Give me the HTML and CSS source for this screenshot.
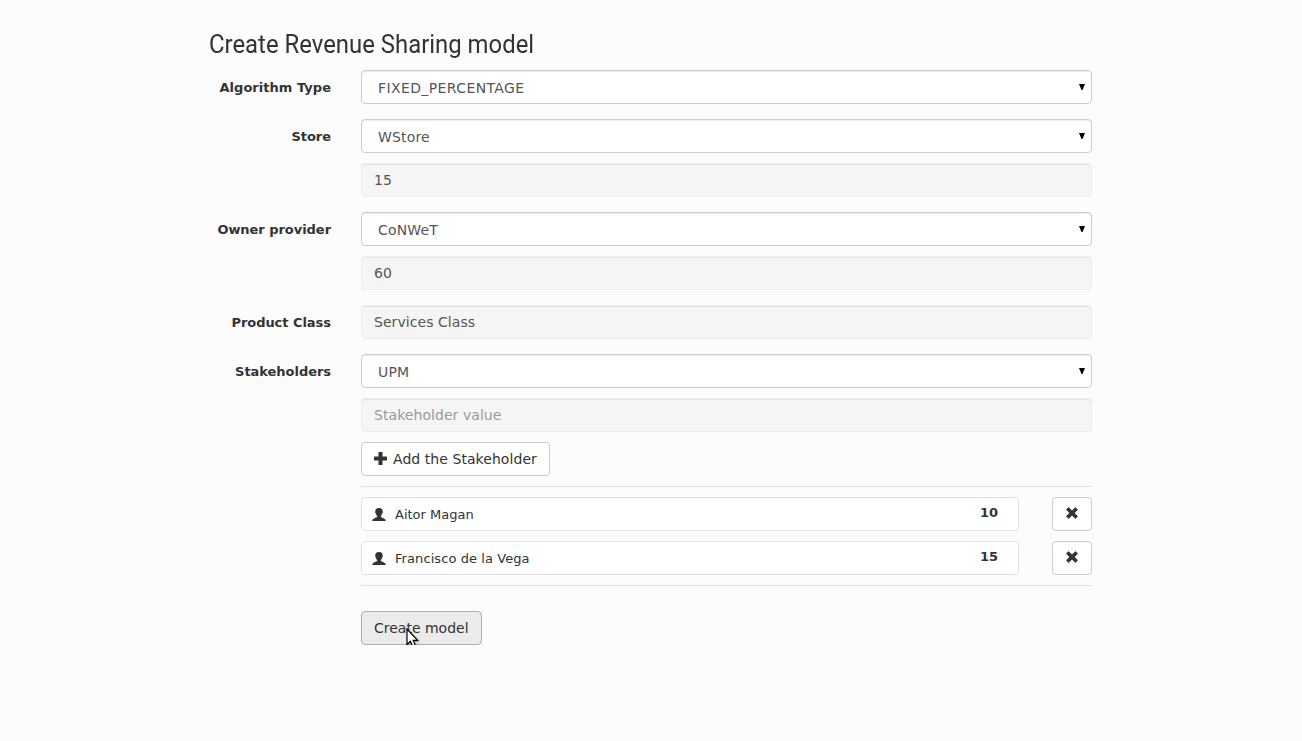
FILE: index.html
```
<!DOCTYPE html>
<html lang="en">
<head>
<meta charset="utf-8">
<title>Create Revenue Sharing model</title>
<link rel="stylesheet" href="styles.css">
</head>
<body>
<svg class="defs" aria-hidden="true">
  <symbol id="arrow" viewBox="0 0 6 6"><path d="M0 0H6L3.5 6H2.5Z"/></symbol>
  <symbol id="user" viewBox="0 0 14 13"><path d="M7 0C9.7 0 10.9 1.4 10.7 3.7C11 4.2 10.7 5.3 10 5.7C9.7 7 9.3 7.6 8.9 8V9C9.4 9.9 13.6 10 13.8 13H.2C.4 10 4.6 9.9 5.1 9V8C4.7 7.6 4.3 7 4 5.7C3.3 5.3 3 4.2 3.3 3.7C3.1 1.4 4.3 0 7 0Z"/></symbol>
  <symbol id="remove" viewBox="0 0 12 12"><path d="M3 .4L6 3.4L9 .4Q9.4 0 9.8.4L11.6 2.2Q12 2.6 11.6 3L8.6 6L11.6 9Q12 9.4 11.6 9.8L9.8 11.6Q9.4 12 9 11.6L6 8.6L3 11.6Q2.6 12 2.2 11.6L.4 9.8Q0 9.4.4 9L3.4 6L.4 3Q0 2.6.4 2.2L2.2.4Q2.6 0 3 .4Z"/></symbol>
</svg>
<main class="page">
  <h1 class="title">Create Revenue Sharing model</h1>
  <form class="form">
    <div class="group">
      <span class="label type">Algorithm Type</span>
      <div class="fields"><div class="control select caps">FIXED_PERCENTAGE<svg class="arrow"><use href="#arrow"/></svg></div></div>
    </div>
    <div class="group">
      <span class="label">Store</span>
      <div class="fields">
        <div class="control select">WStore<svg class="arrow"><use href="#arrow"/></svg></div>
        <div class="control disabled">15</div>
      </div>
    </div>
    <div class="group">
      <span class="label">Owner provider</span>
      <div class="fields">
        <div class="control select">CoNWeT<svg class="arrow"><use href="#arrow"/></svg></div>
        <div class="control disabled">60</div>
      </div>
    </div>
    <div class="group">
      <span class="label">Product Class</span>
      <div class="fields"><div class="control disabled">Services Class</div></div>
    </div>
    <div class="group">
      <span class="label">Stakeholders</span>
      <div class="fields">
        <div class="control select">UPM<svg class="arrow"><use href="#arrow"/></svg></div>
        <div class="control disabled placeholder">Stakeholder value</div>
        <button type="button" class="btn add"><svg class="plus" viewBox="0 0 13 13"><path d="M5 0H8Q8.5 0 8.5.5V4.5H12.5Q13 4.5 13 5V8Q13 8.5 12.5 8.5H8.5V12.5Q8.5 13 8 13H5Q4.5 13 4.5 12.5V8.5H.5Q0 8.5 0 8V5Q0 4.5.5 4.5H4.5V.5Q4.5 0 5 0Z"/></svg>Add the Stakeholder</button>
        <div class="holders">
          <div class="holder">
            <div class="card"><svg class="user"><use href="#user"/></svg><span class="name">Aitor Magan</span><b class="share">10</b></div>
            <button type="button" class="btn remove" aria-label="Remove"><svg class="cross"><use href="#remove"/></svg></button>
          </div>
          <div class="holder">
            <div class="card"><svg class="user"><use href="#user"/></svg><span class="name long">Francisco de la Vega</span><b class="share">15</b></div>
            <button type="button" class="btn remove" aria-label="Remove"><svg class="cross"><use href="#remove"/></svg></button>
          </div>
        </div>
        <div class="actions">
          <button type="button" class="btn submit">Create model</button>
          <svg class="cursor" viewBox="0 0 13 21"><path d="M1 1V16.5L4.4 13.3L7.2 19.6L9.9 18.4L7.2 12.4H11.6Z"/></svg>
        </div>
      </div>
    </div>
  </form>
</main>
</body>
</html>
```
FILE: styles.css
```
* { box-sizing: border-box; }
body {
  margin: 0;
  background: #fcfcfc;
  color: #333;
  font: 13px/18px "DejaVu Sans", Verdana, sans-serif;
}
svg { fill: currentColor; flex: none; }
.defs { position: absolute; width: 0; height: 0; }
.page { width: 882px; margin-left: 210px; padding-top: 28px; }
.title {
  width: max-content;
  height: 32px;
  margin: 0 0 10px -1px;
  font: 400 26px/32px Roboto, sans-serif;
  transform: scaleX(.919);
  transform-origin: 0 0;
}
.form { display: flex; flex-direction: column; gap: 15px; }
.group { display: grid; grid-template-columns: 121px 731px; column-gap: 30px; }
.label { padding-top: 9px; text-align: right; font-weight: 700; letter-spacing: -.04px; white-space: nowrap; }
.type { letter-spacing: .03px; }
.fields { display: flex; flex-direction: column; align-items: flex-start; gap: 10px; }
.control {
  display: flex;
  align-items: center;
  justify-content: space-between;
  width: 100%;
  height: 34px;
  padding: 0 12px 1px;
  border: 1px solid #ccc;
  border-radius: 4px;
  background: #fff;
  box-shadow: inset 0 1px 1px rgba(0, 0, 0, .075);
  color: #555;
  font-size: 14px;
  letter-spacing: .06px;
}
.select { padding: 1px 6px 0 16px; letter-spacing: .15px; }
.caps { letter-spacing: .39px; }
.arrow { width: 6px; height: 6px; margin-top: -2px; color: #000; }
.disabled { background: #f5f5f5; border-color: #eee; }
.placeholder { color: #999; }
.btn {
  display: flex;
  align-items: center;
  height: 34px;
  padding: 0 12px;
  border: 1px solid #ccc;
  border-radius: 4px;
  background: #fff;
  color: #333;
  font: 14px/20px "DejaVu Sans", Verdana, sans-serif;
  white-space: nowrap;
}
.add { width: 189px; letter-spacing: .06px; }
.plus { width: 13px; height: 13px; margin: -1px 6px 0 0; }
.holders {
  display: flex;
  flex-direction: column;
  gap: 10px;
  width: 100%;
  padding: 10px 0;
  border: solid #e1e1e1;
  border-width: 1px 0;
}
.holder { display: flex; justify-content: space-between; }
.card {
  display: flex;
  align-items: center;
  width: 658px;
  height: 34px;
  padding: 0 20px 0 10px;
  border: 1px solid #e1e1e1;
  border-radius: 4px;
  background: #fff;
}
.user { width: 14px; height: 13px; margin-right: 9px; }
.name { padding-top: 1px; }
.long { letter-spacing: .08px; }
.share { margin-left: auto; padding-bottom: 3px; }
.remove { width: 40px; justify-content: center; }
.cross { width: 12px; height: 12px; margin-top: -2px; }
.actions { position: relative; margin-top: 15px; }
.submit { background: #ebebeb; border-color: #adadad; }
.cursor {
  position: absolute;
  left: 45px;
  top: 17px;
  width: 13px;
  height: 21px;
  overflow: visible;
  fill: #fff;
  stroke: #000;
  stroke-width: 1.2;
  filter: drop-shadow(1px 1px 1px rgba(0, 0, 0, .35));
}
```
